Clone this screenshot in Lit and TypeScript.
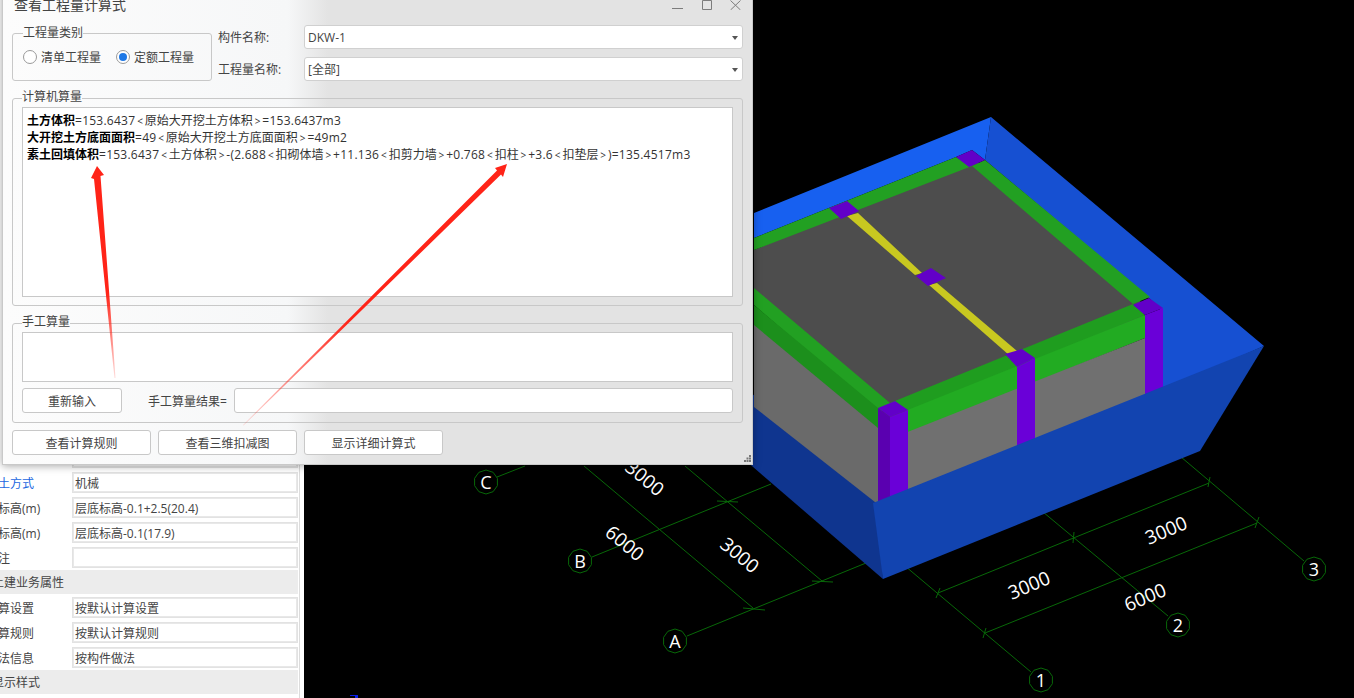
import { LitElement, html, svg, css } from "lit";
import { customElement } from "lit/decorators.js";

const FONT = css`"Open Sans", "Noto Sans CJK SC", sans-serif`;

type Face = [string, string];

// drawn back to front, page coordinates
const faces: Face[] = [
  ["#1760f0", "754,213 991,117 985,160 972,150 956,157 754,238"],
  ["#1650d2", "991,117 1264,346 1160,392 1160,308 1149,298 985,160"],
  ["#0f358f", "745,388 880,498 883,579 745,460"],
  ["#4d4d4d", "975,160 1140,300 1145,320 890,420 754,295 754,250 960,160"],
  ["#22a022", "754,238 956,157 972,166 754,250"],
  ["#22a022", "985,160 1150,297 1133,304 972,166"],
  ["#22a022", "754,288 890,403 900,405 878,412 754,305"],
  ["#1c8f1c", "754,305 878,408 878,430 754,327"],
  ["#1f9d1f", "890,403 1133,304 1145,315 909,412"],
  ["#22ab22", "905,411 1145,315 1145,338 905,435"],
  ["#6a6a6a", "754,325 878,428 880,506 754,407"],
  ["#707070", "905,433 1145,338 1148,396 905,492"],
  ["#c8c820", "847,216 858,213 922,273 915,275"],
  ["#c8c820", "929,285 937,283 1017,351 1009,355"],
  ["#6200c8", "956,157 972,150 985,160 969,167"],
  ["#6200c8", "829,208 847,201 859,211 841,219"],
  ["#6200c8", "916,276 931,268 946,278 928,286"],
  ["#6200c8", "1133,305 1149,298 1163,308 1145,315"],
  ["#6a00d8", "1145,315 1163,308 1163,390 1145,398"],
  ["#6200c8", "1005,354 1022,349 1035,358 1017,367"],
  ["#6a00d8", "1017,367 1035,358 1035,440 1017,448"],
  ["#6200c8", "878,408 895,401 908,410 890,417"],
  ["#5a00b0", "878,408 890,417 890,500 878,506"],
  ["#6a00d8", "890,417 908,410 908,493 890,500"],
  ["#1244b0", "873,503 1264,346 1200,451 883,579"],
];

const lines = [
  // axes
  [905, 566, 1031, 672],
  [1043, 512, 1168, 616],
  [1181, 457, 1304, 561],
  [687, 636, 866, 563],
  [592, 557, 771, 484],
  [497, 477, 525, 466],
  // dimension lines
  [938, 593, 1209, 483],
  [985, 633, 1257, 523],
  [584, 466, 753, 608],
  [685, 466, 822, 581],
  // ticks
  [743, 608, 765, 610],
  [812, 581, 833, 582],
  [717, 501, 738, 502],
  [940, 588, 936, 598],
  [1074, 532, 1073, 543],
  [1210, 477, 1208, 487],
  [986, 628, 983, 638],
  [1259, 517, 1255, 528],
];

const axes = [
  ["C", 486, 482],
  ["B", 580, 561],
  ["A", 675, 641],
  ["1", 1041, 680],
  ["2", 1178, 625],
  ["3", 1314, 569],
] as const;

const dims = [
  ["3000", 645, 478, 40],
  ["6000", 625, 543, 40],
  ["3000", 740, 555, 40],
  ["3000", 1029, 585, -23],
  ["3000", 1166, 530, -23],
  ["6000", 1145, 597, -23],
] as const;

const decagon = (cx: number, cy: number, r: number) =>
  Array.from({ length: 10 }, (_, i) => {
    const a = (i * Math.PI) / 5 + Math.PI / 10;
    return `${(cx + r * Math.cos(a)).toFixed(1)},${(cy + r * Math.sin(a)).toFixed(1)}`;
  }).join(" ");

const props = [
  { label: "", value: "", x: -14 },
  { label: "挖土方式", value: "机械", x: -14, link: true },
  { label: "顶标高(m)", value: "层底标高-0.1+2.5(20.4)", x: -14 },
  { label: "底标高(m)", value: "层底标高-0.1(17.9)", x: -14 },
  { label: "备注", value: "", x: -14 },
  { label: "土建业务属性", x: -8, group: true },
  { label: "计算设置", value: "按默认计算设置", x: -14 },
  { label: "计算规则", value: "按默认计算规则", x: -14 },
  { label: "做法信息", value: "按构件做法", x: -14 },
  { label: "显示样式", x: -8, group: true },
];

// < and > sit apart from their neighbours, the latin runs are set a little wider
const formula = (text: string) =>
  text.split(/([<>]|[^<>\u4e00-\u9fff]+)/).map((t) => {
    if (t === "<" || t === ">") return html`<span class="op">${t}</span>`;
    if (t && !/[\u4e00-\u9fff]/.test(t)) return html`<span class="num">${t}</span>`;
    return t;
  });

@customElement("prop-panel")
class PropPanel extends LitElement {
  static styles = css`
    :host {
      display: flex;
      flex-direction: column;
      justify-content: flex-end;
      width: 304px;
      height: 698px;
      box-sizing: border-box;
      padding: 0 6px 3px 0;
      background: #fff;
      overflow: hidden;
      font: 12px/16px ${FONT};
      color: #444;
      position: relative;
    }
    :host::after {
      content: "";
      position: absolute;
      left: 299px;
      top: 0;
      bottom: 0;
      width: 1px;
      background: #dcdcdc;
    }
    .row {
      display: flex;
      align-items: center;
      height: 25px;
      flex: none;
    }
    .label {
      width: 72px;
      flex: none;
      white-space: nowrap;
      padding-top: 2px;
    }
    .link {
      color: #1a66e0;
    }
    .value {
      flex: 1;
      height: 21px;
      box-sizing: border-box;
      border: 1px solid #e2e2e2;
      outline: 1px solid #e8e8e8;
      outline-offset: -2px;
      padding: 1px 0 0 2px;
      line-height: 20px;
      white-space: nowrap;
    }
    .group {
      background: #ececec;
      height: 24px;
      margin-bottom: 1px;
    }
  `;

  render() {
    return props.map((p) =>
      p.group
        ? html`<div class="row group">
            <span class="label"><span style="margin-left:${p.x}px">${p.label}</span></span>
          </div>`
        : html`<div class="row">
            <span class="label ${p.link ? "link" : ""}">
              <span style="margin-left:${p.x}px">${p.label}</span>
            </span>
            <div class="value">${p.value}</div>
          </div>`
    );
  }
}

@customElement("model-scene")
class ModelScene extends LitElement {
  static styles = css`
    :host {
      display: block;
      flex: 1;
      height: 698px;
      background: #000;
      overflow: hidden;
    }
    svg {
      display: block;
    }
    .grid {
      stroke: #086808;
      stroke-width: 1;
      fill: none;
    }
    .axis-name {
      fill: #fff;
      font: 18px "Open Sans", sans-serif;
      text-anchor: middle;
    }
    .dim {
      fill: #fff;
      font: 19px "Open Sans", sans-serif;
      text-anchor: middle;
      dominant-baseline: central;
    }
  `;

  render() {
    return html`<svg width="1050" height="698" viewBox="304 0 1050 698">
      ${lines.map(
        ([x1, y1, x2, y2]) =>
          svg`<line class="grid" x1=${x1} y1=${y1} x2=${x2} y2=${y2}></line>`
      )}
      ${axes.map(
        ([name, x, y]) => svg`
          <polygon class="grid" points=${decagon(x, y, 12)}></polygon>
          <text class="axis-name" x=${x} y=${y + 6.5}>${name}</text>`
      )}
      ${dims.map(
        ([t, x, y, rot]) =>
          svg`<text class="dim" x=${x} y=${y} transform="rotate(${rot} ${x} ${y})">${t}</text>`
      )}
      ${faces.map(([fill, pts]) => svg`<polygon fill=${fill} points=${pts}></polygon>`)}
      <rect x="350" y="695" width="8" height="1" fill="#0a1ee6"></rect>
      <rect x="355" y="696" width="3" height="2" fill="#0a1ee6"></rect>
    </svg>`;
  }
}

@customElement("quantity-dialog")
class QuantityDialog extends LitElement {
  static styles = css`
    :host {
      position: absolute;
      left: 2px;
      top: -10px;
      width: 751px;
      height: 475px;
      box-sizing: border-box;
      display: flex;
      flex-direction: column;
      padding: 0 9px;
      background: linear-gradient(90deg, #fcfcfc 0, #f6f7f8 285px, #e3e3e3 325px);
      border: 1px solid #c9c9c9;
      box-shadow: 0 1px 8px rgba(0, 0, 0, 0.35);
      font: 12px/16px ${FONT};
      color: #444;
    }
    .title {
      height: 28px;
      margin: 0 -9px 6px;
      padding: 0 11px;
      display: flex;
      align-items: center;
      justify-content: space-between;
      flex: none;
    }
    .title span {
      font-size: 14px;
    }
    .controls {
      display: flex;
      gap: 18px;
      align-items: center;
    }
    .controls svg {
      display: block;
      stroke: #7c7c7c;
      fill: none;
    }
    .top {
      display: flex;
      height: 56px;
      flex: none;
      margin-bottom: 9px;
    }
    fieldset {
      margin: 0;
      padding: 1px 9px 8px;
      min-width: 0;
      border: 1px solid #c8c8c8;
      border-radius: 3px;
      box-sizing: border-box;
    }
    legend {
      padding: 0;
      line-height: 16px;
    }
    .kind {
      width: 200px;
      flex: none;
      display: flex;
      gap: 15px;
      padding: 8px 0 0 10px;
    }
    .radio {
      display: flex;
      align-items: center;
      gap: 4px;
      height: 16px;
    }
    .radio em {
      font-style: normal;
      padding-top: 2px;
    }
    .dot {
      width: 14px;
      height: 14px;
      box-sizing: border-box;
      border: 1px solid #9a9a9a;
      border-radius: 50%;
      background: #fff;
      display: flex;
      align-items: center;
      justify-content: center;
    }
    .dot.on::after {
      content: "";
      width: 8px;
      height: 8px;
      border-radius: 50%;
      background: #1e78e6;
    }
    .names {
      flex: 1;
      margin-left: 6px;
      display: grid;
      grid-template-columns: 86px 1fr;
      grid-template-rows: 24px 24px;
      row-gap: 8px;
      align-items: center;
    }
    .names > span {
      padding-top: 2px;
    }
    .combo {
      height: 24px;
      box-sizing: border-box;
      border: 1px solid #d0d0d0;
      border-radius: 3px;
      background: #fff;
      padding: 1px 4px 0 3px;
      display: flex;
      align-items: center;
      justify-content: space-between;
      line-height: 21px;
    }
    .combo i {
      width: 0;
      height: 0;
      border: 3px solid transparent;
      border-top: 4px solid #555;
      border-bottom: 0;
    }
    .calc {
      height: 216px;
      flex: none;
      margin-bottom: 9px;
    }
    .calc legend,
    .hand legend {
      position: relative;
      top: -1px;
    }
    .sheet {
      background: #fff;
      border: 1px solid #c8c8c8;
      box-sizing: border-box;
    }
    .calc .sheet {
      height: 190px;
      padding: 4px 4px;
      line-height: 17px;
      color: #333;
      white-space: nowrap;
    }
    .calc b {
      color: #000;
      font-weight: 700;
    }
    .op {
      display: inline-block;
      width: 9.5px;
      text-align: center;
      font-size: 10px;
      line-height: 10px;
    }
    .num {
      letter-spacing: 0.25px;
    }
    .hand {
      height: 108px;
      flex: none;
      margin-bottom: 7px;
      padding-bottom: 9px;
    }
    .hand .sheet {
      height: 50px;
    }
    .result {
      display: flex;
      align-items: center;
      margin-top: 6px;
      height: 25px;
    }
    button {
      all: unset;
      box-sizing: border-box;
      height: 25px;
      border: 1px solid #c8c8c8;
      border-radius: 3px;
      background: #fff;
      text-align: center;
      font: inherit;
      line-height: 24px;
      padding-top: 1px;
      color: #444;
    }
    .again {
      width: 100px;
      flex: none;
    }
    .result span {
      margin-left: 26px;
      width: 86px;
      flex: none;
      padding-top: 2px;
    }
    .result .box {
      flex: 1;
      height: 25px;
      box-sizing: border-box;
      background: #fff;
      border: 1px solid #c8c8c8;
      border-radius: 3px;
    }
    .actions {
      display: flex;
      gap: 7px;
      flex: none;
    }
    .actions button {
      width: 139px;
    }
    .grip {
      position: absolute;
      right: 1px;
      bottom: 2px;
    }
  `;

  render() {
    return html`
      <div class="title">
        <span>查看工程量计算式</span>
        <div class="controls">
          <svg width="11" height="10"><path d="M0 8.5H11"></path></svg>
          <svg width="11" height="10"><path d="M1.5.5H10.500V9.500H1.500Z"></path></svg>
          <svg width="11" height="10"><path d="M.5.5L10.500 10M10.500.5L.5 10"></path></svg>
        </div>
      </div>
      <div class="top">
        <fieldset class="kind">
          <legend>工程量类别</legend>
          <label class="radio"><span class="dot"></span><em>清单工程量</em></label>
          <label class="radio"><span class="dot on"></span><em>定额工程量</em></label>
        </fieldset>
        <div class="names">
          <span>构件名称:</span>
          <div class="combo">DKW-1<i></i></div>
          <span>工程量名称:</span>
          <div class="combo">[全部]<i></i></div>
        </div>
      </div>
      <fieldset class="calc">
        <legend>计算机算量</legend>
        <div class="sheet">
          <div><b>土方体积</b>${formula("=153.6437<原始大开挖土方体积>=153.6437m3")}</div>
          <div><b>大开挖土方底面面积</b>${formula("=49<原始大开挖土方底面面积>=49m2")}</div>
          <div><b>素土回填体积</b>${formula(
            "=153.6437<土方体积>-(2.688<扣砌体墙>+11.136<扣剪力墙>+0.768<扣柱>+3.6<扣垫层>)=135.4517m3"
          )}</div>
        </div>
      </fieldset>
      <fieldset class="hand">
        <legend>手工算量</legend>
        <div class="sheet"></div>
        <div class="result">
          <button class="again">重新输入</button>
          <span>手工算量结果=</span>
          <div class="box"></div>
        </div>
      </fieldset>
      <div class="actions">
        <button>查看计算规则</button>
        <button>查看三维扣减图</button>
        <button>显示详细计算式</button>
      </div>
      <svg class="grip" width="7" height="7" fill="#777">
        <rect x="5" y="0" width="2" height="2"></rect>
        <rect x="2.500" y="2.500" width="2" height="2"></rect>
        <rect x="5" y="2.500" width="2" height="2"></rect>
        <rect x="0" y="5" width="2" height="2"></rect>
        <rect x="2.500" y="5" width="2" height="2"></rect>
        <rect x="5" y="5" width="2" height="2"></rect>
      </svg>
    `;
  }
}

@customElement("app-root")
class AppRoot extends LitElement {
  static styles = css`
    :host {
      display: flex;
      position: relative;
      width: 1354px;
      height: 698px;
      overflow: hidden;
    }
    .arrows {
      position: absolute;
      left: 0;
      top: 0;
      pointer-events: none;
    }
  `;

  render() {
    return html`
      <prop-panel></prop-panel>
      <model-scene></model-scene>
      <quantity-dialog></quantity-dialog>
      <svg class="arrows" width="1354" height="698">
        <defs>
          <linearGradient id="fade1" gradientUnits="userSpaceOnUse" x1="97" y1="166" x2="115" y2="378">
            <stop offset="0.6" stop-color="#ff2418"></stop>
            <stop offset="1" stop-color="#ff2418" stop-opacity="0.15"></stop>
          </linearGradient>
          <linearGradient id="fade2" gradientUnits="userSpaceOnUse" x1="507" y1="164" x2="243" y2="425">
            <stop offset="0.6" stop-color="#ff2418"></stop>
            <stop offset="1" stop-color="#ff2418" stop-opacity="0.15"></stop>
          </linearGradient>
        </defs>
        <polygon fill="url(#fade1)" points="97,166 104,175 100.500,176 115.500,378 114.500,378 94,179 91,178"></polygon>
        <polygon fill="url(#fade2)" points="507,164 503,177 501,174.500 243.500,425.500 243,425 497,170.500 495,168"></polygon>
      </svg>
    `;
  }
}
